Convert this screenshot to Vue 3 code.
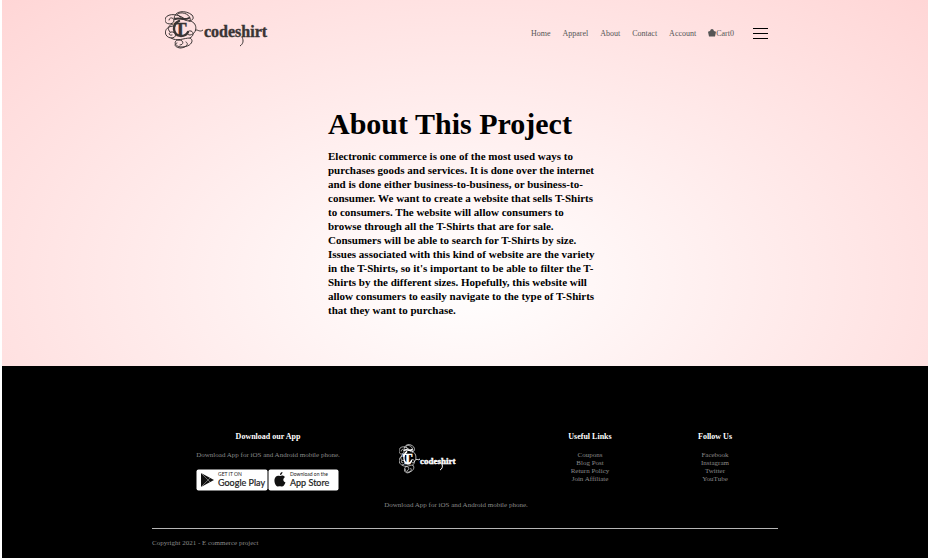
<script setup>
const navLinks = ['Home', 'Apparel', 'About', 'Contact', 'Account']
const usefulLinks = ['Coupons', 'Blog Post', 'Return Policy', 'Join Affiliate']
const socialLinks = ['Facebook', 'Instagram', 'Twitter', 'YouTube']
</script>

<template>
  <div class="page">
    <header class="navbar">
      <a class="brand" href="#" aria-label="T-codeshirt">
        <svg class="logo" viewBox="0 0 104 38">
          <defs>
            <g id="flourish" fill="none" stroke="currentColor" stroke-linecap="round">
              <path d="M20 8C11 1 0 3 0 9C0 14 8 14 9 10C9 6 4 6 4 9" />
              <path d="M9 8C9 -1 21 -1 27 4C31 9 24 12 18 8C12 4 11 3 15 2C21 1 27 6 25 10" />
              <path d="M24 10C33 10 33 23 25 24C21 24 22 19 26 20C29 21 29 25 25 27" />
              <path d="M9 15C-2 15 -2 26 6 27C13 27 11 20 6 21C3 22 4 25 7 24M8 13C3 14 2 18 5 21" />
              <path d="M6 27C12 31 19 27 25 27C30 30 25 36 17 36C9 36 8 29 14 29C19 29 19 34 15 34" />
              <path d="M12 32C9 33 9 36 15 37C20 37 25 33 21 31" />
              <path d="M14 10C7 13 7 24 16 25C20 25 22 23 23 21" stroke-width="2.4" />
              <path d="M10 8C14 6 19 10 24 7" stroke-width="2" />
            </g>
          </defs>
          <use href="#flourish" />
          <path class="dash" d="M30 20C32 17 34 22 38 19" />
          <g class="lettering">
            <text x="9" y="25" font-size="19">T</text>
            <text x="39" y="26" font-size="16">codeshirt</text>
          </g>
          <path class="tail" d="M77 26C79 30 78 33 75 35" />
        </svg>
      </a>
      <nav class="nav">
        <a v-for="link in navLinks" :key="link" href="#">{{ link }}</a>
        <a class="cart" href="#">
          <svg class="bag" viewBox="0 0 8 8"><path d="M2 2Q2.500 0 4 0T6 2L8 2.800 7 7.500H1L0 2.800Z" /></svg>Cart0
        </a>
      </nav>
      <button class="menu" type="button" aria-label="Menu">
        <span></span><span></span><span></span>
      </button>
    </header>

    <main class="about">
      <h1>About This Project</h1>
      <p>
        Electronic commerce is one of the most used ways to purchases goods and services. It is done
        over the internet and is done either business-to-business, or business-to-consumer. We want to
        create a website that sells T-Shirts to consumers. The website will allow consumers to browse
        through all the T-Shirts that are for sale. Consumers will be able to search for T-Shirts by
        size. Issues associated with this kind of website are the variety in the T-Shirts, so it's
        important to be able to filter the T-Shirts by the different sizes. Hopefully, this website
        will allow consumers to easily navigate to the type of T-Shirts that they want to purchase.
      </p>
    </main>

    <footer class="footer">
      <div class="columns">
        <section>
          <h3>Download our App</h3>
          <p>Download App for iOS and Android mobile phone.</p>
          <div class="stores">
            <a href="#" aria-label="Get it on Google Play">
              <svg viewBox="0 0 72 22">
                <rect x=".5" y=".5" width="71" height="21" rx="2" fill="#fff" />
                <path d="M5 4L18 11 5 18Z" fill="#111" />
                <path d="M5 4L14 13M5 18L14 9" stroke="#aaa" stroke-width=".6" />
                <text x="22" y="7" font-size="5">GET IT ON</text>
                <text x="22" y="17" font-size="9" class="store-name">Google Play</text>
              </svg>
            </a>
            <a href="#" aria-label="Download on the App Store">
              <svg viewBox="0 0 72 22">
                <rect x=".5" y=".5" width="70" height="21" rx="2" fill="#fff" />
                <path d="M12 7C14 6 16 6.500 17 8C14.500 10 15 12.500 17.500 13.500C16.500 16 15 18 13.500 17.500C12 17 11.500 17 10 17.500C8 18 6 13.500 6.500 10.500C7 7 9.500 6 12 7ZM12 6C11.800 4.500 13 3 14.500 3C14.500 4.500 13.500 6 12 6Z" fill="#111" />
                <text x="22" y="7" font-size="5">Download on the</text>
                <text x="22" y="17" font-size="9" class="store-name">App Store</text>
              </svg>
            </a>
          </div>
        </section>
        <section class="brand-column">
          <svg class="footer-logo" viewBox="0 0 60 30" role="img" aria-label="T-codeshirt">
            <use href="#flourish" transform="scale(.55 .78)" />
            <path class="dash" d="M17 16C18 14 19 17 21 15" />
            <g class="lettering">
              <text x="4" y="20" font-size="14">T</text>
              <text x="21" y="20" font-size="9">codeshirt</text>
            </g>
            <path class="tail" d="M43 20C44 23 43 25 41 26" />
          </svg>
          <p>Download App for iOS and Android mobile phone.</p>
        </section>
        <section>
          <h3>Useful Links</h3>
          <ul>
            <li v-for="link in usefulLinks" :key="link"><a href="#">{{ link }}</a></li>
          </ul>
        </section>
        <section>
          <h3>Follow Us</h3>
          <ul>
            <li v-for="link in socialLinks" :key="link"><a href="#">{{ link }}</a></li>
          </ul>
        </section>
      </div>
      <hr />
      <p class="copyright">Copyright 2021 - E commerce project</p>
    </footer>
  </div>
</template>

<style>
body {
  background: #fff;
}
</style>

<style scoped>
.page {
  display: flex;
  flex-direction: column;
  min-height: 100vh;
  margin: 0 1px 0 2px;
  background: radial-gradient(#fff, #ffd6d6);
  font-family: 'Liberation Serif', 'Times New Roman', serif;
}
h1, h3, p, ul {
  margin: 0;
  padding: 0;
}
a {
  color: inherit;
  text-decoration: none;
}
.navbar {
  display: flex;
  align-items: center;
  padding: 11px 160px 11px 163px;
  color: #555;
  font-size: 8px;
}
.brand {
  margin-right: auto;
  color: #3a3434;
}
.logo {
  display: block;
  width: 104px;
  height: 38px;
}
.lettering {
  fill: currentColor;
  stroke: currentColor;
  stroke-width: .4;
  font-weight: bold;
}
.dash, .tail {
  fill: none;
  stroke: currentColor;
}
.nav {
  display: flex;
  gap: 12px;
  line-height: 10px;
  padding-top: 8px;
}
.cart {
  display: flex;
}
.bag {
  width: 8px;
  height: 8px;
  fill: #555;
}
.menu {
  display: flex;
  flex-direction: column;
  gap: 4px;
  width: 15px;
  margin: 7px 0 0 19px;
  padding: 0;
  border: 0;
  background: none;
}
.menu span {
  height: 1px;
  background: #000;
}
.about {
  width: 274px;
  margin: 0 auto;
  padding: 46px 0 49px;
  color: #000;
}
h1 {
  font-size: 30px;
  line-height: 36px;
}
.about p {
  max-width: 270px;
  margin-top: 7px;
  font-size: 11px;
  font-weight: bold;
  line-height: 14px;
}
.footer {
  flex: 1;
  padding: 66px 150px 10px;
  background: #000;
  color: #8a8a8a;
  font-size: 7px;
  line-height: 8px;
}
.columns {
  display: grid;
  grid-template-columns: 232fr 144fr 124fr 126fr;
  text-align: center;
  white-space: nowrap;
}
h3 {
  margin-bottom: 10px;
  color: #fff;
  font-size: 8px;
  line-height: 9px;
}
ul {
  list-style: none;
}
.stores {
  display: flex;
  justify-content: center;
  margin-top: 10px;
}
.stores svg {
  display: block;
  width: 72px;
  height: 22px;
  font-family: Lato, sans-serif;
  fill: #222;
}
.store-name {
  stroke: #222;
  stroke-width: .2;
}
.brand-column {
  padding-top: 12px;
}
.footer-logo {
  display: block;
  width: 60px;
  height: 30px;
  margin: 0 0 27px 15px;
  color: #fff;
}
hr {
  height: 1px;
  margin: 19px 0 10px;
  border: 0;
  background: #b5b5b5;
}
</style>
